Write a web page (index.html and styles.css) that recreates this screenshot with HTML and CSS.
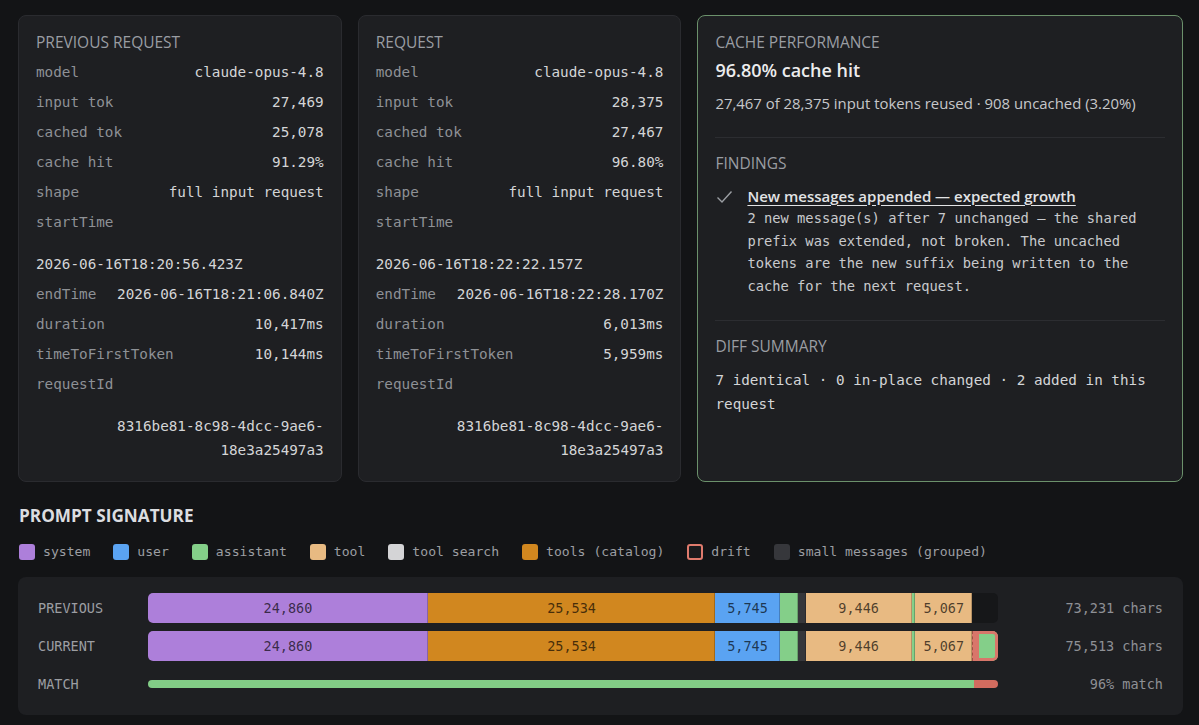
FILE: index.html
```html
<!DOCTYPE html>
<html lang="en">
<head>
    <meta charset="UTF-8">
    <meta name="viewport" content="width=device-width, initial-scale=1.0">
    <title>Prompt Cache Inspector</title>
    <link rel="stylesheet" href="styles.css">
</head>
<body>
    <div class="page">
        <div class="cards">
            <div class="card">
                <div class="card-title">PREVIOUS REQUEST</div>
                <div class="kv"><span class="k">model</span><span class="v">claude-opus-4.8</span></div>
                <div class="kv"><span class="k">input tok</span><span class="v">27,469</span></div>
                <div class="kv"><span class="k">cached tok</span><span class="v">25,078</span></div>
                <div class="kv"><span class="k">cache hit</span><span class="v">91.29%</span></div>
                <div class="kv"><span class="k">shape</span><span class="v">full input request</span></div>
                <div class="kv"><span class="k">startTime</span><span class="v">2026-06-16T18:20:56.423Z</span></div>
                <div class="kv"><span class="k">endTime</span><span class="v">2026-06-16T18:21:06.840Z</span></div>
                <div class="kv"><span class="k">duration</span><span class="v">10,417ms</span></div>
                <div class="kv"><span class="k">timeToFirstToken</span><span class="v">10,144ms</span></div>
                <div class="kv"><span class="k">requestId</span><span class="v">8316be81-8c98-4dcc-9ae6-18e3a25497a3</span></div>
            </div>
            <div class="card">
                <div class="card-title">REQUEST</div>
                <div class="kv"><span class="k">model</span><span class="v">claude-opus-4.8</span></div>
                <div class="kv"><span class="k">input tok</span><span class="v">28,375</span></div>
                <div class="kv"><span class="k">cached tok</span><span class="v">27,467</span></div>
                <div class="kv"><span class="k">cache hit</span><span class="v">96.80%</span></div>
                <div class="kv"><span class="k">shape</span><span class="v">full input request</span></div>
                <div class="kv"><span class="k">startTime</span><span class="v">2026-06-16T18:22:22.157Z</span></div>
                <div class="kv"><span class="k">endTime</span><span class="v">2026-06-16T18:22:28.170Z</span></div>
                <div class="kv"><span class="k">duration</span><span class="v">6,013ms</span></div>
                <div class="kv"><span class="k">timeToFirstToken</span><span class="v">5,959ms</span></div>
                <div class="kv"><span class="k">requestId</span><span class="v">8316be81-8c98-4dcc-9ae6-18e3a25497a3</span></div>
            </div>
            <div class="card accent">
                <div class="section">
                    <div class="card-title">CACHE PERFORMANCE</div>
                    <div class="hit">96.80% cache hit</div>
                    <div class="hit-sub">27,467 of 28,375 input tokens reused · 908 uncached (3.20%)</div>
                </div>
                <div class="section">
                    <div class="card-title">FINDINGS</div>
                    <div class="finding">
                        <svg class="check" width="18" height="14" viewBox="0 0 18 14">
                            <polyline points="2.5,7.5 7,12 16.5,1.5" fill="none" stroke="#9b9ea3" stroke-width="1.4"/>
                        </svg>
                        <div>
                            <div class="finding-title">New messages appended — expected growth</div>
                            <div class="finding-text">2 new message(s) after 7 unchanged — the shared prefix was extended, not broken. The uncached tokens are the new suffix being written to the cache for the next request.</div>
                        </div>
                    </div>
                </div>
                <div class="section">
                    <div class="card-title">DIFF SUMMARY</div>
                    <div class="diff-text">7 identical · 0 in-place changed · 2 added in this request</div>
                </div>
            </div>
        </div>

        <h2 class="sig-title">PROMPT SIGNATURE</h2>
        <div class="legend">
            <span class="legend-item"><i class="sw system"></i>system</span>
            <span class="legend-item"><i class="sw user"></i>user</span>
            <span class="legend-item"><i class="sw assistant"></i>assistant</span>
            <span class="legend-item"><i class="sw tool"></i>tool</span>
            <span class="legend-item"><i class="sw search"></i>tool search</span>
            <span class="legend-item"><i class="sw catalog"></i>tools (catalog)</span>
            <span class="legend-item"><i class="sw drift"></i>drift</span>
            <span class="legend-item"><i class="sw small"></i>small messages (grouped)</span>
        </div>

        <div class="sig-panel">
            <div class="sig-label">PREVIOUS</div>
            <div class="track">
                <div class="seg system" style="width:32.922%">24,860</div>
                <div class="seg catalog" style="width:33.814%">25,534</div>
                <div class="seg user" style="width:7.608%">5,745</div>
                <div class="seg assistant" style="width:2.092%"></div>
                <div class="seg small" style="width:0.926%"></div>
                <div class="seg tool" style="width:12.509%">9,446</div>
                <div class="seg assistant" style="width:0.397%"></div>
                <div class="seg tool" style="width:6.710%">5,067</div>
            </div>
            <div class="sig-meta">73,231 chars</div>

            <div class="sig-label">CURRENT</div>
            <div class="track">
                <div class="seg system" style="width:32.922%">24,860</div>
                <div class="seg catalog" style="width:33.814%">25,534</div>
                <div class="seg user" style="width:7.608%">5,745</div>
                <div class="seg assistant" style="width:2.092%"></div>
                <div class="seg small" style="width:0.926%"></div>
                <div class="seg tool" style="width:12.509%">9,446</div>
                <div class="seg assistant" style="width:0.397%"></div>
                <div class="seg tool" style="width:6.710%">5,067</div>
                <div class="seg tool drifted" style="width:0.45%"></div>
                <div class="seg assistant drifted last" style="width:2.572%"></div>
            </div>
            <div class="sig-meta">75,513 chars</div>

            <div class="sig-label">MATCH</div>
            <div class="match-track">
                <div class="match-ok" style="width:97.2%"></div>
                <div class="match-bad"></div>
            </div>
            <div class="sig-meta">96% match</div>
        </div>
    </div>
</body>
</html>
```

FILE: styles.css
```css
body {
    margin: 0;
    background-color: #131416;
    font-family: "Open Sans", "Noto Sans", sans-serif;
    color: #d6d7d9;
}
.page {
    padding: 15px 16px 10px 18px;
}
.cards {
    display: grid;
    grid-template-columns: 1fr 1fr 1.5fr;
    gap: 16px;
}
.card {
    background-color: #1e1f22;
    border: 1px solid #2a2b2f;
    border-radius: 8px;
    padding: 16px 17px;
}
.card.accent {
    border-color: #6b916b;
}
.card-title {
    font-size: 15.5px;
    line-height: 20px;
    color: #9a9da2;
    margin-bottom: 5px;
}
.kv {
    display: flex;
    flex-wrap: wrap;
    justify-content: space-between;
    column-gap: 12px;
    row-gap: 18px;
    padding: 3px 0;
    font-family: "DejaVu Sans Mono", monospace;
    font-size: 14.3px;
    line-height: 24px;
}
.k {
    color: #8e9196;
}
.v {
    color: #d4d5d7;
    text-align: right;
}
.section {
    padding-bottom: 23px;
    border-bottom: 1px solid #2c2d31;
    margin-bottom: 15px;
}
.section:last-child {
    border-bottom: none;
    margin-bottom: 0;
    padding-bottom: 0;
}
.hit {
    font-size: 18px;
    font-weight: 600;
    line-height: 26px;
    margin-top: 5px;
    color: #ececed;
}
.hit-sub {
    font-size: 14.9px;
    line-height: 22px;
    margin-top: 9px;
    color: #c6c7ca;
}
.finding {
    display: flex;
    margin-top: 12px;
}
.check {
    flex: none;
    margin: 5px 14px 0 0;
}
.finding-title {
    font-size: 15px;
    font-weight: 600;
    line-height: 22px;
    color: #e2e3e5;
    text-decoration: underline;
    text-underline-offset: 3px;
}
.finding-text {
    font-family: "DejaVu Sans Mono", monospace;
    font-size: 13.75px;
    line-height: 22.6px;
    color: #c9cacd;
}
.diff-text {
    font-family: "DejaVu Sans Mono", monospace;
    font-size: 14.3px;
    line-height: 24px;
    color: #d4d5d7;
    margin-top: 12px;
}
.sig-title {
    margin: 23px 0 0 1px;
    font-size: 17.2px;
    font-weight: 700;
    line-height: 22px;
    color: #dcdde0;
}
.legend {
    display: flex;
    gap: 23px;
    margin: 15px 0 0 1px;
    font-family: "DejaVu Sans Mono", monospace;
    font-size: 13.1px;
    line-height: 20px;
    color: #9c9ea2;
}
.legend-item {
    display: flex;
    align-items: center;
    gap: 8px;
}
.sw {
    width: 16px;
    height: 16px;
    border-radius: 3px;
    box-sizing: border-box;
}
.system { background-color: #ad7fda; }
.user { background-color: #5aa3f2; }
.assistant { background-color: #84cf89; }
.tool { background-color: #e8ba82; }
.search { background-color: #d4d4d6; }
.catalog { background-color: #d1871f; }
.small { background-color: #36373b; }
.sw.drift {
    border: 2px solid #e07b6d;
    background-color: #1a1a1c;
}
.sig-panel {
    margin-top: 15px;
    background-color: #1e1f22;
    border-radius: 8px;
    padding: 16px 20px;
    display: grid;
    grid-template-columns: 110px 1fr 165px;
    grid-auto-rows: 30px;
    row-gap: 8px;
    align-items: center;
    font-family: "DejaVu Sans Mono", monospace;
    font-size: 13.5px;
}
.sig-label {
    color: #9c9ea2;
}
.sig-meta {
    text-align: right;
    color: #8e9095;
}
.track {
    height: 30px;
    display: flex;
    background-color: #161719;
    border-radius: 5px;
    overflow: hidden;
}
.seg {
    height: 100%;
    flex: none;
    display: flex;
    align-items: center;
    justify-content: center;
    color: rgba(0, 0, 0, 0.68);
    box-shadow: inset -1px 0 rgba(0, 0, 0, 0.22);
    overflow: hidden;
}
.seg.drifted {
    box-shadow: inset 0 0 0 3px #d8766a;
}
.seg.tool.drifted {
    background-color: #d8766a;
    border-left: 1px dashed #9e4e44;
    box-sizing: border-box;
}
.seg.last {
    border-radius: 0 5px 5px 0;
}
.match-track {
    height: 8px;
    display: flex;
    border-radius: 4px;
    overflow: hidden;
}
.match-ok {
    background-color: #82cc86;
}
.match-bad {
    flex: 1;
    background-color: #d26c5f;
}
```
